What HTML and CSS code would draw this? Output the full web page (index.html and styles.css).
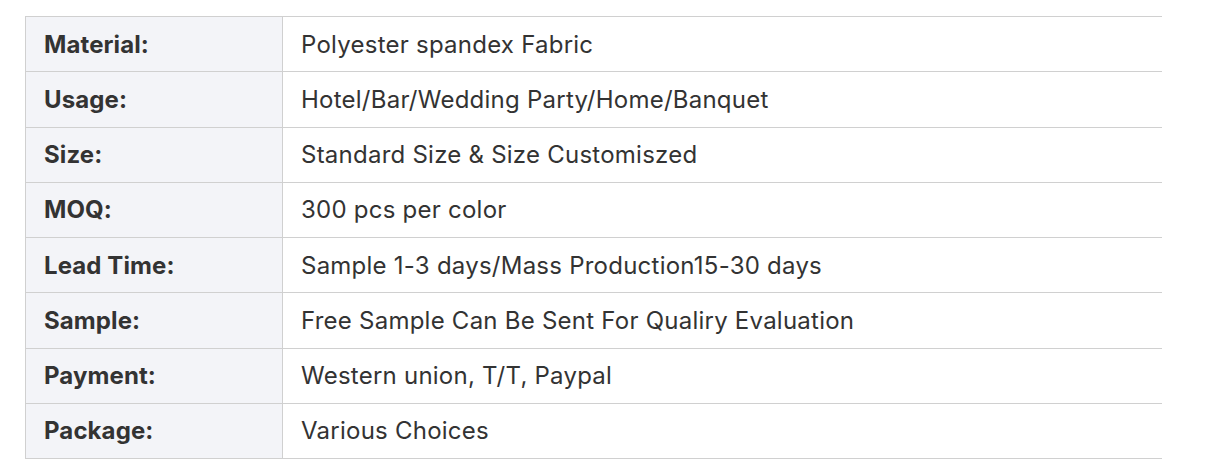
FILE: index.html
```html
<!DOCTYPE html>
<html>
<head>
<meta charset="utf-8">
<link rel="stylesheet" href="styles.css">
</head>
<body>
<div class="specs">
  <div class="row"><div class="label">Material:</div><div class="value">Polyester spandex Fabric</div></div>
  <div class="row"><div class="label">Usage:</div><div class="value">Hotel/Bar/Wedding Party/Home/Banquet</div></div>
  <div class="row"><div class="label">Size:</div><div class="value">Standard Size &amp; Size Customiszed</div></div>
  <div class="row"><div class="label">MOQ:</div><div class="value">300 pcs per color</div></div>
  <div class="row"><div class="label">Lead Time:</div><div class="value">Sample 1-3 days/Mass Production15-30 days</div></div>
  <div class="row"><div class="label">Sample:</div><div class="value">Free Sample Can Be Sent For Qualiry Evaluation</div></div>
  <div class="row"><div class="label">Payment:</div><div class="value">Western union, T/T, Paypal</div></div>
  <div class="row"><div class="label">Package:</div><div class="value">Various Choices</div></div>
</div>
</body>
</html>
```
FILE: styles.css
```css
html, body {
  margin: 0;
  padding: 0;
  background: #ffffff;
}
body {
  padding: 16px 0 0 25px;
  font-family: Inter, "Liberation Sans", sans-serif;
  color: #333333;
}
.specs {
  width: 1136px;
  border-left: 1px solid #d0d0d0;
  border-bottom: 1px solid #d0d0d0;
}
.row {
  display: grid;
  grid-template-columns: 257px 1fr;
  border-top: 1px solid #d0d0d0;
  height: 55.25px;
  box-sizing: border-box;
}
.label, .value {
  display: flex;
  align-items: center;
  padding: 0 18px;
  font-size: 24px;
}
.label {
  background: #f3f4f8;
  font-weight: 700;
  border-right: 1px solid #d0d0d0;
  letter-spacing: 0.1px;
}
.value {
  font-weight: 400;
  letter-spacing: 0.24px;
}
```
